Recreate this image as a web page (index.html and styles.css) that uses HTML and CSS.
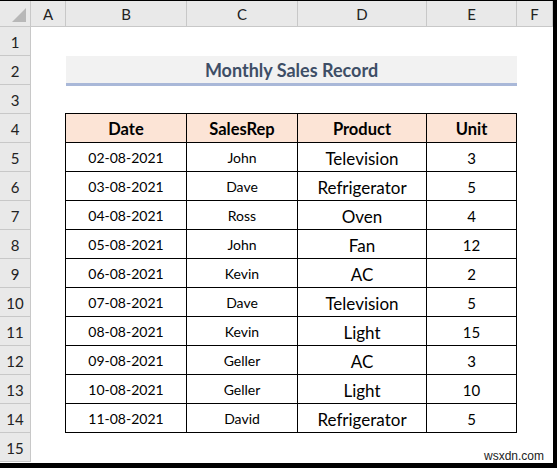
FILE: index.html
```html
<!DOCTYPE html>
<html>
<head>
<meta charset="utf-8">
<link rel="stylesheet" href="styles.css">
</head>
<body>
<div class="frame">
  <div class="sheet">
    <div class="corner"><span class="tri"></span></div>
    <div class="colh">A</div>
    <div class="colh">B</div>
    <div class="colh">C</div>
    <div class="colh">D</div>
    <div class="colh">E</div>
    <div class="colh last">F</div>

    <div class="rowh r1">1</div>
    <div class="rowh r2">2</div>
    <div class="rowh r3">3</div>
    <div class="rowh r4">4</div>
    <div class="rowh r5">5</div>
    <div class="rowh r6">6</div>
    <div class="rowh r7">7</div>
    <div class="rowh r8">8</div>
    <div class="rowh r9">9</div>
    <div class="rowh r10">10</div>
    <div class="rowh r11">11</div>
    <div class="rowh r12">12</div>
    <div class="rowh r13">13</div>
    <div class="rowh r14">14</div>
    <div class="rowh r15">15</div>

    <div class="title">Monthly Sales Record</div>

    <table class="data">
      <colgroup>
        <col class="cb"><col class="cc"><col class="cd"><col class="ce">
      </colgroup>
      <thead>
        <tr><th>Date</th><th>SalesRep</th><th>Product</th><th>Unit</th></tr>
      </thead>
      <tbody>
        <tr><td class="dt">02-08-2021</td><td class="rep">John</td><td class="prod">Television</td><td class="unit">3</td></tr>
        <tr><td class="dt">03-08-2021</td><td class="rep">Dave</td><td class="prod">Refrigerator</td><td class="unit">5</td></tr>
        <tr><td class="dt">04-08-2021</td><td class="rep">Ross</td><td class="prod">Oven</td><td class="unit">4</td></tr>
        <tr><td class="dt">05-08-2021</td><td class="rep">John</td><td class="prod">Fan</td><td class="unit">12</td></tr>
        <tr><td class="dt">06-08-2021</td><td class="rep">Kevin</td><td class="prod">AC</td><td class="unit">2</td></tr>
        <tr><td class="dt">07-08-2021</td><td class="rep">Dave</td><td class="prod">Television</td><td class="unit">5</td></tr>
        <tr><td class="dt">08-08-2021</td><td class="rep">Kevin</td><td class="prod">Light</td><td class="unit">15</td></tr>
        <tr><td class="dt">09-08-2021</td><td class="rep">Geller</td><td class="prod">AC</td><td class="unit">3</td></tr>
        <tr><td class="dt">10-08-2021</td><td class="rep">Geller</td><td class="prod">Light</td><td class="unit">10</td></tr>
        <tr><td class="dt">11-08-2021</td><td class="rep">David</td><td class="prod">Refrigerator</td><td class="unit">5</td></tr>
      </tbody>
    </table>

    <div class="mark">wsxdn.com</div>
  </div>
</div>
</body>
</html>
```

FILE: styles.css
```css
html, body {
  margin: 0;
  padding: 0;
  background: #000;
}
.frame {
  width: 557px;
  height: 468px;
  box-sizing: border-box;
  padding: 1px 4px 5px 0;
  background: #000;
}
.sheet {
  position: relative;
  width: 553px;
  height: 462px;
  background: #fff;
  display: grid;
  grid-template-columns: 31px 35px 121px 111px 129px 90px 36px;
  grid-template-rows: 26px repeat(15, 29px);
  font-family: Lato, "Liberation Sans", sans-serif;
  color: #000;
}
.corner {
  grid-row: 1;
  grid-column: 1;
  background: #e9e9e9;
  border-right: 1px solid #c8c8c8;
  border-bottom: 1px solid #c8c8c8;
  position: relative;
}
.tri {
  position: absolute;
  right: 4px;
  bottom: 4px;
  width: 0;
  height: 0;
  border-left: 14px solid transparent;
  border-bottom: 14px solid #b8b8b8;
}
.colh {
  grid-row: 1;
  background: #e9e9e9;
  border-right: 1px solid #c8c8c8;
  border-bottom: 1px solid #c8c8c8;
  display: flex;
  align-items: center;
  justify-content: center;
  font-size: 15px;
  color: #222;
  box-sizing: border-box;
}
.rowh {
  grid-column: 1;
  background: #e9e9e9;
  border-right: 1px solid #c8c8c8;
  border-bottom: 1px solid #c8c8c8;
  display: flex;
  align-items: center;
  justify-content: center;
  font-size: 15px;
  color: #222;
  box-sizing: border-box;
  padding-top: 2px;
}
.r1 { grid-row: 2; } .r2 { grid-row: 3; } .r3 { grid-row: 4; } .r4 { grid-row: 5; }
.r5 { grid-row: 6; } .r6 { grid-row: 7; } .r7 { grid-row: 8; } .r8 { grid-row: 9; }
.r9 { grid-row: 10; } .r10 { grid-row: 11; } .r11 { grid-row: 12; } .r12 { grid-row: 13; }
.r13 { grid-row: 14; } .r14 { grid-row: 15; } .r15 { grid-row: 16; }

.title {
  grid-row: 3;
  grid-column: 3 / 7;
  background: #f2f2f2;
  border-bottom: 3px solid #a9b8d8;
  box-sizing: border-box;
  height: 30px;
  display: flex;
  align-items: center;
  justify-content: center;
  font-weight: bold;
  font-size: 18px;
  color: #3e4e66;
  padding-top: 1px;
}
.data {
  grid-row: 5 / 16;
  grid-column: 3 / 7;
  align-self: start;
  border-collapse: collapse;
  table-layout: fixed;
  width: 452px;
  margin-left: -1px;
  margin-top: -1px;
}
.cb { width: 121px; }
.cc { width: 111px; }
.cd { width: 129px; }
.ce { width: 90px; }
.data th, .data td {
  border: 1px solid #000;
  height: 26px;
  padding: 2px 0 0;
  text-align: center;
  vertical-align: middle;
  line-height: 1;
}
.data th {
  background: #fce4d6;
  font-weight: bold;
  font-size: 16.5px;
}
.data td.dt { font-size: 14px; }
.data td.rep { font-size: 14px; }
.data td.prod { font-size: 17px; }
.data td.unit { font-size: 15px; }
.mark {
  position: absolute;
  right: 9px;
  bottom: 0;
  font-family: "Liberation Sans", Arial, sans-serif;
  font-size: 12px;
  color: #222;
}
```
